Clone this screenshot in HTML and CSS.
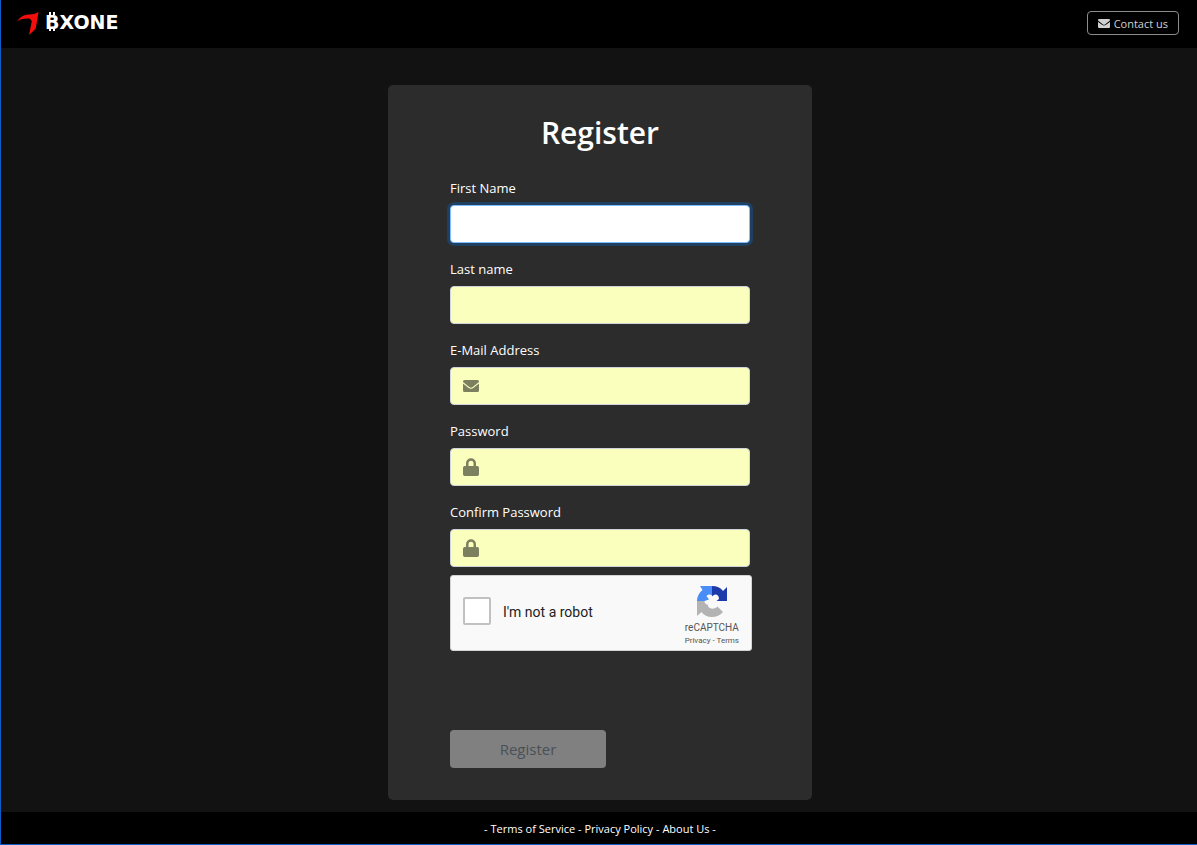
FILE: index.html
```html
<!DOCTYPE html>
<html lang="en">
<head>
<meta charset="utf-8">
<meta name="viewport" content="width=device-width, initial-scale=1">
<title>Register - BXONE</title>
<link rel="stylesheet" href="styles.css">
</head>
<body>
<svg class="sprite" aria-hidden="true">
  <symbol id="envelope" viewBox="0 0 16 12">
    <path d="M1.500 0h13A1.500 1.500 0 0 1 16 1.500v.6C14 3.800 11 6.100 9.800 6.900 9.200 7.300 8.600 7.700 8 7.700s-1.200-.4-1.800-.8C5 6.100 2 3.800 0 2.100v-.6A1.500 1.500 0 0 1 1.500 0z"/>
    <path d="M0 3.500C2 5.100 4.200 6.800 5.400 7.700 6.200 8.300 7.100 8.800 8 8.800s1.800-.5 2.600-1.100C11.800 6.800 14 5.100 16 3.500v7A1.500 1.500 0 0 1 14.500 12h-13A1.500 1.500 0 0 1 0 10.500z"/>
  </symbol>
  <symbol id="lock" viewBox="0 0 16 18">
    <path fill-rule="evenodd" d="M1.700 8H3V5.200a5 5 0 0 1 10 0V8h1.300A1.700 1.700 0 0 1 16 9.700v6.600a1.700 1.700 0 0 1-1.700 1.700H1.700A1.700 1.700 0 0 1 0 16.300V9.700A1.700 1.700 0 0 1 1.700 8zM5.500 8h5V5.200a2.500 2.500 0 0 0-5 0z"/>
  </symbol>
</svg>
<header class="topbar">
  <a class="brand" href="#">
    <svg class="brand-mark" viewBox="0 0 24 24" aria-hidden="true"><path fill="#f40d0d" d="M0 9.500C3 5.500 6 3.500 10 2.800L18 2.200 22.500 0 19.500 17.500 12.500 24 15.500 9.500 13.500 7C9 6.600 4.500 7.200 0 9.500z"/></svg>
    <span class="brand-name"><span class="coin">B</span>XONE</span>
  </a>
  <button class="contact" type="button"><svg class="contact-icon" aria-hidden="true"><use href="#envelope"/></svg>Contact us</button>
</header>
<main class="content">
  <form class="card">
    <h1 class="title">Register</h1>
    <div class="field">
      <label class="label" for="first">First Name</label>
      <input class="input focused" id="first" type="text">
    </div>
    <div class="field">
      <label class="label" for="last">Last name</label>
      <input class="input" id="last" type="text">
    </div>
    <div class="field">
      <label class="label" for="email">E-Mail Address</label>
      <div class="control">
        <input class="input with-icon" id="email" type="email">
        <svg class="mail-icon" aria-hidden="true"><use href="#envelope"/></svg>
      </div>
    </div>
    <div class="field">
      <label class="label" for="password">Password</label>
      <div class="control">
        <input class="input with-icon" id="password" type="password">
        <svg class="lock-icon" aria-hidden="true"><use href="#lock"/></svg>
      </div>
    </div>
    <div class="field">
      <label class="label" for="confirm">Confirm Password</label>
      <div class="control">
        <input class="input with-icon" id="confirm" type="password">
        <svg class="lock-icon" aria-hidden="true"><use href="#lock"/></svg>
      </div>
    </div>
    <div class="captcha">
      <input class="captcha-box" id="robot" type="checkbox">
      <label class="captcha-label" for="robot">I'm not a robot</label>
      <div class="captcha-brand">
        <svg class="captcha-logo" viewBox="0 0 32 32" aria-hidden="true">
          <path fill="#4a8df6" d="M4 1h12v9.500C14.500 9 12 9 10.500 11L13 14.500 8.500 16H1C1 11.500 3 8 6.500 5z"/>
          <path fill="#1c3aa9" d="M16 1c5 0 8.500 1.800 11 5l4-4v14H20.500L23 14C23 11 21.500 9.500 19.500 9.500 18 9.500 17 10.500 16 11.500z"/>
          <path fill="#b3b3b3" d="M1 16h7.500C8.500 18 9.500 19.500 11.500 19.500L12.500 22C15 24.500 19 24 21.500 21.500L27 27C24 30.500 20.500 32 16 32c-4.500 0-8-1.800-10.500-5L1 31z"/>
        </svg>
        <span class="captcha-name">reCAPTCHA</span>
        <span class="captcha-links"><a href="#">Privacy</a> - <a href="#">Terms</a></span>
      </div>
    </div>
    <button class="submit" type="submit" disabled>Register</button>
  </form>
</main>
<footer class="footer">
  - <a href="#">Terms of Service</a> - <a href="#">Privacy Policy</a> - <a href="#">About Us</a> -
</footer>
</body>
</html>
```

FILE: styles.css
```css
*, *::before, *::after { box-sizing: border-box; }

body {
  margin: 0;
  min-height: 100vh;
  display: flex;
  flex-direction: column;
  border-left: 1px solid #0d5bc4;
  border-bottom: 1px solid #0d5bc4;
  background: #121212;
  color: #fff;
  font-family: "Open Sans", "Noto Sans", sans-serif;
  font-size: 13px;
  line-height: 21px;
}

a { color: inherit; text-decoration: none; }
button, input { font-family: inherit; }

.sprite { position: absolute; width: 0; height: 0; }

.topbar {
  display: flex;
  justify-content: space-between;
  align-items: center;
  height: 48px;
  padding: 0 18px 2px 16px;
  background: #000;
}

.brand { display: flex; align-items: center; gap: 5px; }
.brand-mark { width: 23px; height: 23px; }
.brand-name {
  padding-bottom: 2px;
  font-family: "DejaVu Sans", sans-serif;
  font-size: 19px;
  line-height: 20px;
  font-weight: 700;
}

.coin { position: relative; }
.coin::before, .coin::after {
  content: "";
  position: absolute;
  left: 4px;
  width: 6px;
  height: 3px;
  border: solid #fff;
  border-width: 0 2px;
}
.coin::before { top: 1px; }
.coin::after { bottom: 2px; }

.contact {
  display: flex;
  align-items: center;
  gap: 4px;
  height: 24px;
  padding: 0 10px;
  border: 1px solid #8c8c8c;
  border-radius: 4px;
  background: transparent;
  color: #d0d0d0;
  font-size: 11px;
}
.contact-icon { width: 12px; height: 9px; fill: currentColor; }

.content {
  flex: 1;
  display: flex;
  justify-content: center;
  align-items: flex-start;
  padding: 37px 0 12px 2px;
}

.card {
  width: 424px;
  max-width: 100%;
  padding: 28px 62px 32px;
  border-radius: 5px;
  background: #2c2c2c;
}

.title {
  margin: 0 0 26px;
  font-size: 30px;
  line-height: 39px;
  font-weight: 600;
  text-align: center;
}

.field { margin-bottom: 16px; }
.label {
  display: block;
  margin-bottom: 6px;
}
.control { position: relative; }

.input {
  display: block;
  width: 100%;
  height: 38px;
  padding: 6px 12px;
  border: 1px solid #ced4da;
  border-radius: 4px;
  outline: 0;
  background: #faffbd;
  font-size: 16px;
}
.input.with-icon { padding-left: 40px; }
.input.focused {
  border-color: #80bdff;
  background: #fff;
  box-shadow: 0 0 0 3px #1f4061;
}

.mail-icon, .lock-icon {
  position: absolute;
  left: 13px;
  width: 16px;
  fill: #7d805f;
}
.mail-icon { top: 13px; height: 12px; }
.lock-icon { top: 10px; height: 18px; }

.captcha {
  display: flex;
  align-items: center;
  width: 302px;
  height: 76px;
  margin-top: -8px;
  padding: 0 12px;
  border: 1px solid #d3d3d3;
  border-radius: 3px;
  background: #f9f9f9;
  color: #222;
  font-family: Roboto, sans-serif;
  font-size: 14px;
}
.captcha-box {
  appearance: none;
  width: 28px;
  height: 28px;
  margin: 0 12px 4px 0;
  border: 2px solid #c1c1c1;
  border-radius: 2px;
  background: #fff;
}
.captcha-label { padding-bottom: 2px; }
.captcha-brand {
  display: flex;
  flex-direction: column;
  align-items: center;
  margin-left: auto;
  padding-top: 6px;
  color: #555;
}
.captcha-logo { width: 32px; height: 32px; }
.captcha-name { margin-top: 4px; font-size: 10px; line-height: 14px; }
.captcha-links { font-size: 8px; line-height: 12px; }

.submit {
  display: block;
  width: 156px;
  height: 38px;
  margin-top: 79px;
  padding: 0;
  border: 0;
  border-radius: 4px;
  background: #808080;
  color: #495057;
  font-size: 15px;
}

.footer {
  height: 32px;
  padding: 6px 0 0 2px;
  background: #000;
  font-size: 11px;
  text-align: center;
}
```
